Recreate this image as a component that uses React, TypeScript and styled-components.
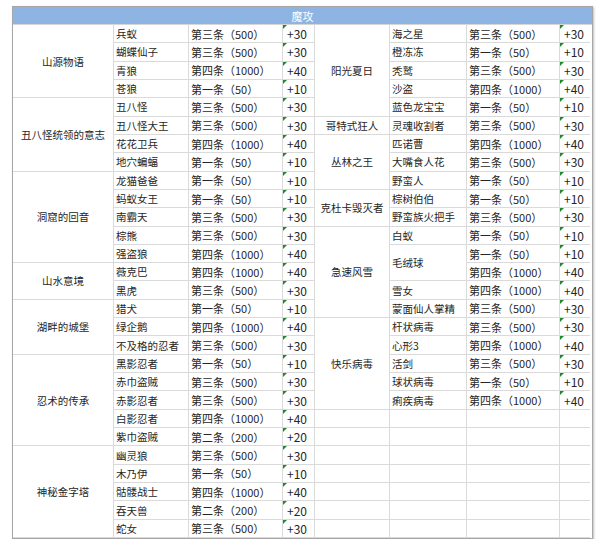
import React from 'react'
import styled, { createGlobalStyle } from 'styled-components'

const GlobalStyle = createGlobalStyle`
  body {
    margin: 0;
    background: #fff;
  }
`

const Sheet = styled.div`
  margin: 6px 0 0 12px;
  width: 579px;
  border: 1px solid #a6a6a6;
  box-shadow: 1px 1px 2px rgba(0, 0, 0, 0.25);
  font-family: 'Noto Sans CJK SC', 'Microsoft YaHei', sans-serif;
  font-size: 11px;
  color: #262626;
  background: #fff;
`

const Title = styled.div`
  height: 17px;
  display: flex;
  align-items: center;
  justify-content: center;
  background: #8db4e2;
  color: #fff;
  border-bottom: 1px solid #d6d6d6;
`

const Body = styled.div`
  display: flex;
`

const Half = styled.div<{ $cols: string }>`
  display: grid;
  grid-template-columns: ${({ $cols }) => $cols};
  grid-template-rows: repeat(28, 1fr);
  height: 513px;
`

const Cell = styled.div<{ $span?: number; $center?: boolean; $edge?: boolean }>`
  grid-row: span ${({ $span }) => $span || 1};
  display: flex;
  align-items: center;
  justify-content: ${({ $center }) => ($center ? 'center' : 'flex-start')};
  padding-left: ${({ $center }) => ($center ? 0 : 2)}px;
  border-right: ${({ $edge }) => ($edge ? 'none' : '1px solid #dadada')};
  border-bottom: 1px solid #dadada;
  white-space: nowrap;
  overflow: hidden;
  min-width: 0;
`

const Label = styled(Cell)`
  font-size: 10.5px;
`

const Bonus = styled(Cell)<{ $flag?: boolean }>`
  position: relative;
  padding-left: 4px;
  font-size: 12px;
  &::before {
    content: '';
    display: ${({ $flag }) => ($flag ? 'block' : 'none')};
    position: absolute;
    top: 0;
    left: 0;
    border-top: 4px solid #1f8a2c;
    border-right: 4px solid transparent;
  }
`

interface Row {
  name?: string
  span?: number
  cond: string
  plus: string
}

type Group = [string, Row[]]

const r = (name: string | undefined, cond: string, plus: string, span?: number): Row => ({ name, cond, plus, span })

const c50 = '第一条（50）'
const c200 = '第二条（200）'
const c500 = '第三条（500）'
const c1000 = '第四条（1000）'

const leftGroups: Group[] = [
  ['山源物语', [r('兵蚁', c500, '+30'), r('蝴蝶仙子', c500, '+30'), r('青狼', c1000, '+40'), r('苍狼', c50, '+10')]],
  ['丑八怪统领的意志', [r('丑八怪', c500, '+30'), r('丑八怪大王', c500, '+30'), r('花花卫兵', c1000, '+40'), r('地穴蝙蝠', c50, '+10')]],
  ['洞窟的回音', [r('龙猫爸爸', c50, '+10'), r('蚂蚁女王', c50, '+10'), r('南霸天', c500, '+30'), r('棕熊', c500, '+30'), r('强盗狼', c1000, '+40')]],
  ['山水意境', [r('薇克巴', c1000, '+40'), r('黑虎', c500, '+30')]],
  ['湖畔的城堡', [r('猎犬', c50, '+10'), r('绿企鹅', c1000, '+40'), r('不及格的忍者', c500, '+30')]],
  ['忍术的传承', [r('黑影忍者', c50, '+10'), r('赤巾盗贼', c500, '+30'), r('赤影忍者', c500, '+30'), r('白影忍者', c1000, '+40'), r('紫巾盗贼', c200, '+20')]],
  ['神秘金字塔', [r('幽灵狼', c500, '+30'), r('木乃伊', c50, '+10'), r('骷髅战士', c1000, '+40'), r('吞天兽', c200, '+20'), r('蛇女', c500, '+30')]],
]

const rightGroups: Group[] = [
  ['阳光夏日', [r('海之星', c500, '+30'), r('橙冻冻', c50, '+10'), r('秃鹫', c500, '+30'), r('沙盗', c1000, '+40'), r('蓝色龙宝宝', c50, '+10')]],
  ['哥特式狂人', [r('灵魂收割者', c500, '+30')]],
  ['丛林之王', [r('匹诺曹', c1000, '+40'), r('大嘴食人花', c500, '+30'), r('野蛮人', c50, '+10')]],
  ['克杜卡毁灭者', [r('棕树伯伯', c50, '+10'), r('野蛮族火把手', c500, '+30')]],
  ['急速风雪', [r('白蚁', c50, '+10'), r('毛绒球', c50, '+10', 2), r(undefined, c1000, '+40'), r('雪女', c1000, '+40'), r('蒙面仙人掌精', c500, '+30')]],
  ['快乐病毒', [r('杆状病毒', c500, '+30'), r('心形3', c1000, '+40'), r('活剑', c500, '+30'), r('球状病毒', c50, '+10'), r('痢疾病毒', c1000, '+40')]],
]

function Side({ groups, cols, edge, total }: { groups: Group[]; cols: string; edge?: boolean; total: number }) {
  const used = groups.reduce((n, g) => n + g[1].length, 0)
  const blanks = Array.from({ length: total - used })
  return (
    <Half $cols={cols}>
      {groups.map(([label, rows]) =>
        rows.map((row, i) => (
          <React.Fragment key={label + i}>
            {i === 0 && (
              <Label $span={rows.length} $center>
                {label}
              </Label>
            )}
            {row.name !== undefined && <Label $span={row.span}>{row.name}</Label>}
            <Cell>{row.cond}</Cell>
            <Bonus $flag $edge={edge}>
              {row.plus}
            </Bonus>
          </React.Fragment>
        ))
      )}
      {blanks.map((_, i) => (
        <React.Fragment key={'b' + i}>
          <Cell />
          <Cell />
          <Cell />
          <Bonus $edge={edge} />
        </React.Fragment>
      ))}
    </Half>
  )
}

export default function App() {
  return (
    <>
      <GlobalStyle />
      <Sheet>
        <Title>魔攻</Title>
        <Body>
          <Side groups={leftGroups} cols="101px 75px 94px 32px" total={28} />
          <Side groups={rightGroups} cols="75px 77px 93px 30px" edge total={28} />
        </Body>
      </Sheet>
    </>
  )
}
